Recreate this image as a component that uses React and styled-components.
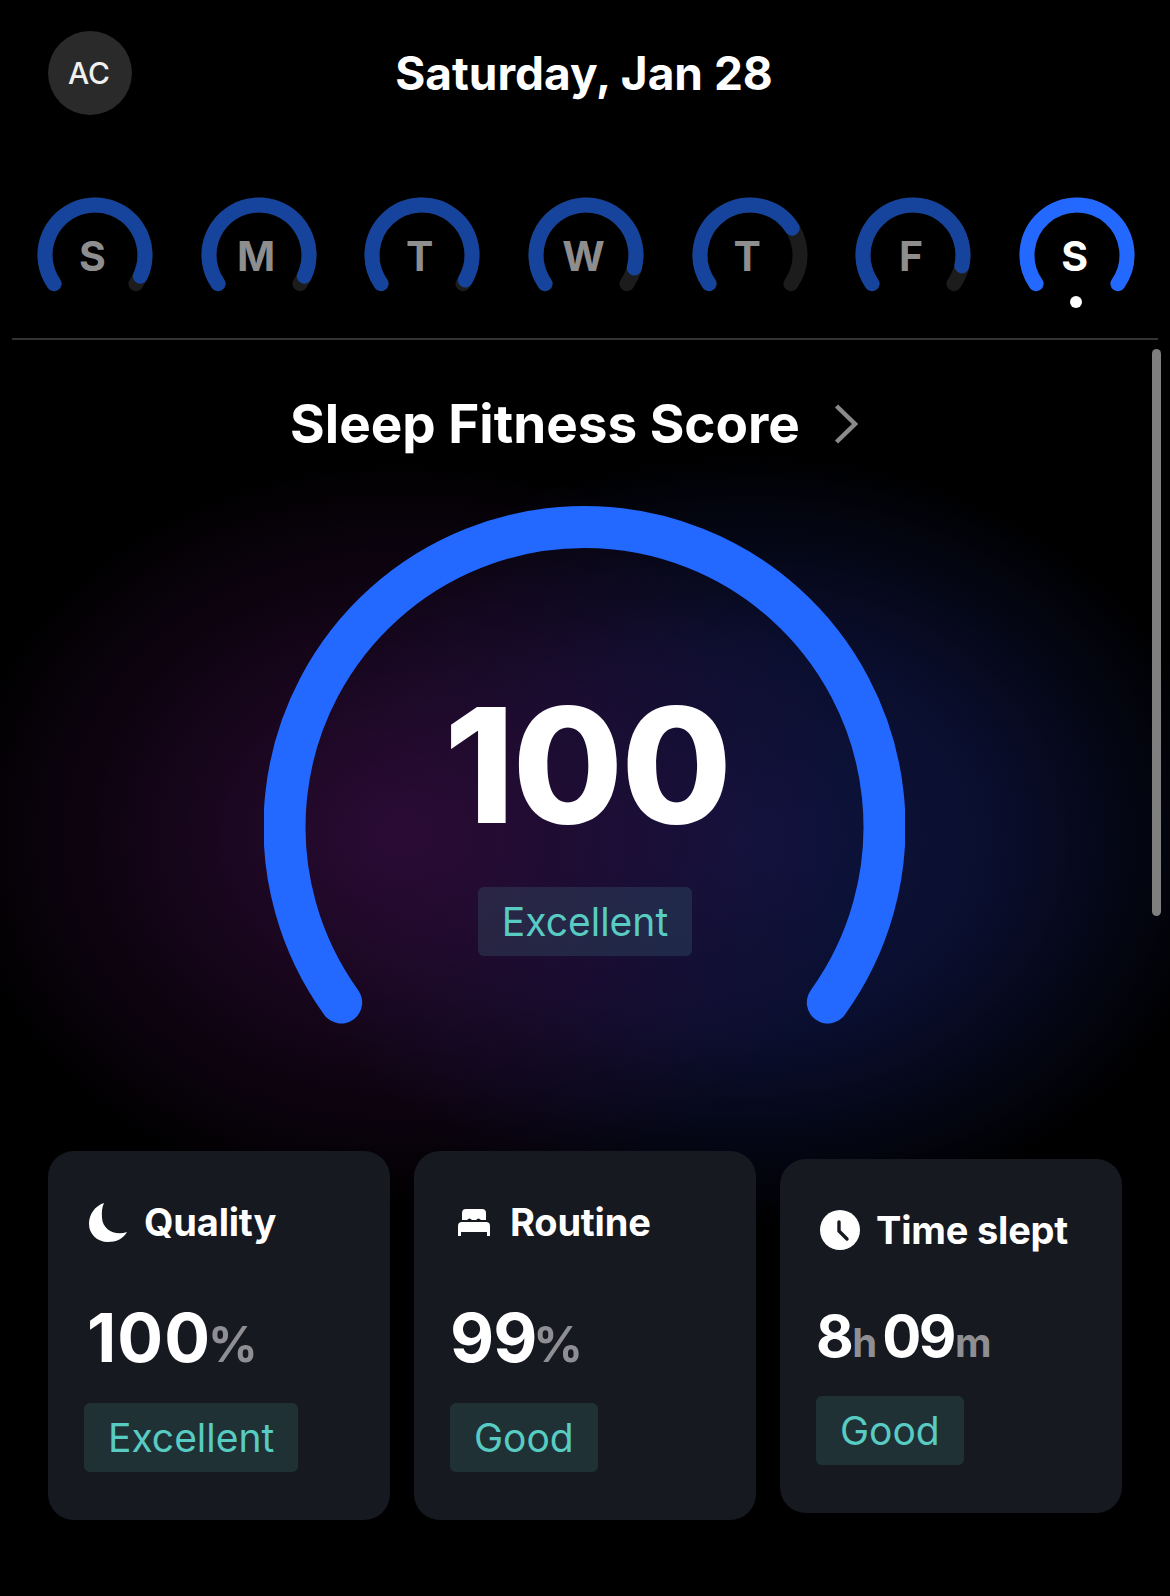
import React from "react";
import styled, { createGlobalStyle } from "styled-components";

const GlobalStyle = createGlobalStyle`
  html, body {
    margin: 0;
    padding: 0;
    background: #000;
  }
  body {
    font-family: Inter, "Noto Sans", sans-serif;
    color: #fff;
  }
`;

const Page = styled.div`
  width: 1170px;
  height: 1596px;
  overflow: hidden;
  background: #000;
`;
const TopBar = styled.header`
  display: grid;
  grid-template-columns: 1fr auto 1fr;
  align-items: center;
  padding: 31px 48px 0;
`;
const Avatar = styled.div`
  width: 84px;
  height: 84px;
  padding-right: 2px;
  box-sizing: border-box;
  border-radius: 50%;
  background: #2a2a2a;
  display: flex;
  align-items: center;
  justify-content: center;
  font-size: 30px;
  font-weight: 500;
  color: #f0f0f0;
`;
const DateTitle = styled.h1`
  margin: 0 2px 0 0;
  font-size: 46px;
  font-weight: 700;
  line-height: 56px;
`;
const Days = styled.nav`
  display: grid;
  grid-template-columns: repeat(7, 1fr);
  margin: 82px 12px 0;
  padding-bottom: 30px;
  border-bottom: 2px solid #333;
`;
const Day = styled.div`
  position: relative;
  height: 111px;
  display: flex;
  justify-content: center;
  padding-left: 2px;
`;
const DayLetter = styled.span`
  position: absolute;
  top: 29px;
  left: 0;
  right: 3px;
  text-align: center;
  font-size: 41px;
  line-height: 60px;
  font-weight: 700;
  color: ${(p) => (p.$active ? "#fff" : "#8e8e8e")};
`;
const DayDot = styled.span`
  position: absolute;
  top: 99px;
  left: 50%;
  width: 12px;
  height: 12px;
  margin-left: -6px;
  border-radius: 50%;
  background: #fff;
`;
const Main = styled.main`
  position: relative;
  padding-top: 52px;
  background:
    radial-gradient(ellipse 450px 380px at 400px 495px, #2b0b34 0%, rgba(43, 11, 52, 0.55) 45%, rgba(43, 11, 52, 0) 100%),
    radial-gradient(ellipse 480px 390px at 750px 500px, #0e1440 0%, rgba(14, 20, 64, 0.72) 50%, rgba(14, 20, 64, 0) 100%);
`;
const Scrollbar = styled.div`
  position: absolute;
  top: 9px;
  right: 9px;
  width: 9px;
  height: 567px;
  border-radius: 5px;
  background: #7f7f7f;
`;
const ScoreTitle = styled.div`
  display: flex;
  align-items: center;
  justify-content: center;
  gap: 34px;
  height: 64px;
  padding-right: 22px;
`;
const ScoreText = styled.h2`
  margin: 0;
  font-size: 53px;
  font-weight: 700;
  line-height: 64px;
`;
const GaugeWrap = styled.div`
  position: relative;
  width: 641px;
  height: 525px;
  margin: 50px auto 0;
  left: -1px;
`;
const GaugeCenter = styled.div`
  position: absolute;
  top: 179px;
  left: 6px;
  right: 0;
  display: flex;
  flex-direction: column;
  align-items: center;
`;
const GaugeNumber = styled.div`
  font-size: 160px;
  line-height: 160px;
  font-weight: 800;
  letter-spacing: -2px;
`;
const Tag = styled.span`
  display: inline-block;
  align-self: ${(p) => (p.$start ? "flex-start" : "center")};
  height: 69px;
  line-height: 69px;
  padding: 0 24px;
  border-radius: 6px;
  background: rgba(100, 220, 210, 0.13);
  color: #58cbc3;
  font-size: 39px;
  font-weight: 400;
`;
const CenterTag = styled(Tag)`
  margin-top: 42px;
  position: relative;
  left: -2px;
`;
const Cards = styled.section`
  display: grid;
  grid-template-columns: repeat(3, 342px);
  gap: 24px;
  align-items: center;
  padding: 0 48px;
  margin-top: 120px;
`;
const Card = styled.article`
  display: flex;
  flex-direction: column;
  padding: 48px 36px;
  border-radius: 26px;
  background: #161920;
`;
const CardHeader = styled.div`
  display: flex;
  align-items: center;
  gap: 16px;
  height: 46px;
  margin-left: 4px;
`;
const IconSlot = styled.span`
  width: 40px;
  display: flex;
  justify-content: center;
`;
const CardTitle = styled.h3`
  margin: 0;
  font-size: 38px;
  font-weight: 700;
  letter-spacing: -0.2px;
  line-height: 46px;
`;
const Value = styled.div`
  display: flex;
  align-items: baseline;
  margin-top: ${(p) => (p.$small ? "47px" : "51px")};
  margin-bottom: ${(p) => (p.$small ? "24px" : "25px")};
  margin-left: ${(p) => p.$inset || 0}px;
  font-size: ${(p) => (p.$small ? "58px" : "68px")};
  line-height: ${(p) => (p.$small ? "72px" : "82px")};
  font-weight: 700;
  letter-spacing: ${(p) => p.$track}px;
`;
const Unit = styled.span`
  font-size: ${(p) => (p.$small ? "40px" : "49px")};
  line-height: 1;
  font-weight: 700;
  letter-spacing: 0;
  color: #8e8e93;
  margin-left: ${(p) => (p.$small ? "1px" : "-3px")};
  margin-right: ${(p) => (p.$spaced ? "5px" : "0")};
`;

const toXY = (cx, cy, r, deg) => {
  const rad = (deg * Math.PI) / 180;
  return [cx + r * Math.sin(rad), cy - r * Math.cos(rad)];
};

// angle is measured from 12 o'clock, the arcs open at the bottom
const arcPath = (cx, cy, r, from, to) => {
  const [x1, y1] = toXY(cx, cy, r, from);
  const [x2, y2] = toXY(cx, cy, r, to);
  const large = to - from > 180 ? 1 : 0;
  return `M${x1.toFixed(2)} ${y1.toFixed(2)}A${r} ${r} 0 ${large} 1 ${x2.toFixed(2)} ${y2.toFixed(2)}`;
};

const DAYS = [
  { letter: "S", pct: 96 },
  { letter: "M", pct: 96 },
  { letter: "T", pct: 98 },
  { letter: "W", pct: 92 },
  { letter: "T", pct: 73 },
  { letter: "F", pct: 91 },
  { letter: "S", pct: 100, active: true },
];

function DayRing({ pct, active }) {
  const end = -125 + (250 * pct) / 100;
  return (
    <svg width="116" height="100" viewBox="0 0 116 100">
      <path d={arcPath(58, 58, 50, -125, 125)} fill="none" stroke="#1c1c1c" strokeWidth="15" strokeLinecap="round" />
      <path d={arcPath(58, 58, 50, -125, end)} fill="none" stroke={active ? "#2369ff" : "#16439c"} strokeWidth="15" strokeLinecap="round" />
    </svg>
  );
}

const Chevron = () => (
  <svg width="24" height="40" viewBox="0 0 24 40">
    <path d="M2.500 2 L21 20 L2.500 38" fill="none" stroke="#8a8a8a" strokeWidth="4.500" />
  </svg>
);

const MoonIcon = () => (
  <svg width="38" height="39" viewBox="0 0 38 39">
    <path d="M15 0C6 3 0 11 0 21C0 31 8 39 19 39C27 39 34 36 38 29C26 33 14 27 13 15C12.600 9 13 4 15 0Z" fill="#fff" />
  </svg>
);

const BedIcon = () => (
  <svg width="32" height="27" viewBox="13 14 32 27">
    <path d="M17 25V18a4 4 0 0 1 4-4H37a4 4 0 0 1 4 4V25H36q-2.500-3-5 0H27q-2.500-3-5 0Z" fill="#fff" />
    <path d="M13 31q0-4 4-4H41q4 0 4 4V41H42V37H16V41H13Z" fill="#fff" />
  </svg>
);

const ClockIcon = () => (
  <svg width="40" height="40" viewBox="0 0 40 40">
    <circle cx="20" cy="20" r="20" fill="#fff" />
    <path d="M19 12V21L27 29" fill="none" stroke="#161920" strokeWidth="3.400" strokeLinecap="round" strokeLinejoin="round" />
  </svg>
);

export default function App() {
  return (
    <Page>
      <GlobalStyle />
      <TopBar>
        <Avatar>AC</Avatar>
        <DateTitle>Saturday, Jan 28</DateTitle>
      </TopBar>
      <Days>
        {DAYS.map((d, i) => (
          <Day key={i}>
            <DayRing pct={d.pct} active={d.active} />
            <DayLetter $active={d.active}>{d.letter}</DayLetter>
            {d.active && <DayDot />}
          </Day>
        ))}
      </Days>
      <Main>
        <Scrollbar />
        <ScoreTitle>
          <ScoreText>Sleep Fitness Score</ScoreText>
          <Chevron />
        </ScoreTitle>
        <GaugeWrap>
          <svg width="641" height="525" viewBox="0 0 641 525">
            <path d={arcPath(320.5, 321, 300, -125.8, 125.8)} fill="none" stroke="#2369ff" strokeWidth="42" strokeLinecap="round" />
          </svg>
          <GaugeCenter>
            <GaugeNumber>100</GaugeNumber>
            <CenterTag>Excellent</CenterTag>
          </GaugeCenter>
        </GaugeWrap>
        <Cards>
          <Card>
            <CardHeader>
              <IconSlot><MoonIcon /></IconSlot>
              <CardTitle>Quality</CardTitle>
            </CardHeader>
            <Value $inset={3} $track={1}>100<Unit>%</Unit></Value>
            <Tag $start>Excellent</Tag>
          </Card>
          <Card>
            <CardHeader>
              <IconSlot><BedIcon /></IconSlot>
              <CardTitle>Routine</CardTitle>
            </CardHeader>
            <Value $track={-1}>99<Unit>%</Unit></Value>
            <Tag $start>Good</Tag>
          </Card>
          <Card>
            <CardHeader>
              <IconSlot><ClockIcon /></IconSlot>
              <CardTitle>Time slept</CardTitle>
            </CardHeader>
            <Value $small $track={-2.5}>8<Unit $small $spaced>h</Unit>09<Unit $small>m</Unit></Value>
            <Tag $start>Good</Tag>
          </Card>
        </Cards>
      </Main>
    </Page>
  );
}
